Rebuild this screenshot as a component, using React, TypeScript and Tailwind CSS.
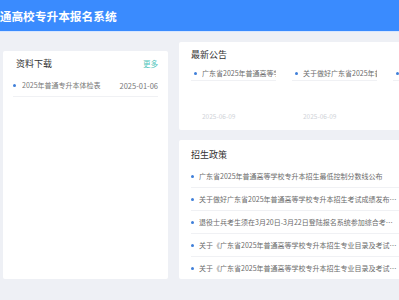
const downloads = [{ title: "2025年普通专升本体检表", date: "2025-01-06" }];

const notices = [
  { title: "广东省2025年普通高等学校专升本招生最低控制分数线公布", date: "2025-06-09" },
  { title: "关于做好广东省2025年普通高等学校专升本招生考试成绩发布工作的通知", date: "2025-06-09" },
  { title: "关于公布2025年专升本考试成绩复核结果的通知", date: "2025-06-09" },
];

const policies = [
  "广东省2025年普通高等学校专升本招生最低控制分数线公布",
  "关于做好广东省2025年普通高等学校专升本招生考试成绩发布工作的通知",
  "退役士兵考生须在3月20日-3月22日登陆报名系统参加综合考查的院校名单",
  "关于《广东省2025年普通高等学校专升本招生专业目录及考试要求》的补充说明",
  "关于《广东省2025年普通高等学校专升本招生专业目录及考试要求》的通知",
];

function Dot() {
  return <span className="h-[3px] w-[3px] shrink-0 rounded-full bg-[#3f7fd9]" />;
}

export default function App() {
  return (
    <div
      className="h-[300px] w-[399px] overflow-hidden bg-[#eef0f5]"
      style={{ fontFamily: '"Noto Sans CJK SC", "Noto Sans", sans-serif' }}
    >
      <header className="flex h-[32px] items-center border-b border-[#d6e6ff] bg-[#3a8bfe]">
        <h1 className="ml-[-12px] whitespace-nowrap text-[11.7px] font-bold text-white">
          普通高校专升本报名系统
        </h1>
      </header>

      <div className="flex items-start">
        <section className="ml-[3px] mt-[19px] h-[228px] w-[165px] shrink-0 rounded-[2px] bg-white px-[10px] pt-[2px]">
          <div className="flex h-[22px] items-center justify-between pl-[3px]">
            <h2 className="text-[9px] text-[#333]">资料下载</h2>
            <span className="text-[7.5px] text-[#52c6bd]">更多</span>
          </div>
          <ul>
            {downloads.map((d) => (
              <li
                key={d.title}
                className="flex h-[22px] items-center gap-[6px] border-b border-[#f0f1f4] text-[7px] text-[#777]"
              >
                <Dot />
                <span className="flex-1 truncate">{d.title}</span>
                <span className="text-[7.5px]">{d.date}</span>
              </li>
            ))}
          </ul>
        </section>

        <div className="ml-[11px] mt-[10px] flex w-[260px] shrink-0 flex-col gap-[10px]">
          <section className="h-[88px] rounded-[2px] bg-white px-[12px] pt-[7px]">
            <h2 className="text-[9px] leading-[12px] text-[#333]">最新公告</h2>
            <div className="mt-[6px] flex gap-[16px]">
              {notices.map((n) => (
                <div key={n.title} className="w-[85px] shrink-0">
                  <div className="flex h-[14px] items-center gap-[5px] overflow-hidden whitespace-nowrap border-b border-[#f0f1f4] pl-[3px] text-[7px] text-[#6b6b6b]">
                    <Dot />
                    <span className="overflow-hidden">{n.title}</span>
                  </div>
                  <p className="mt-[31px] pl-[11px] text-[6.5px] text-[#d0d3d8]">{n.date}</p>
                </div>
              ))}
            </div>
          </section>

          <section className="h-[139px] rounded-[2px] bg-white pl-[12px] pr-[10px] pt-[9px]">
            <h2 className="text-[9px] leading-[12px] text-[#333]">招生政策</h2>
            <ul className="mt-[4px]">
              {policies.map((p, i) => (
                <li
                  key={p}
                  className={`flex h-[23px] items-center gap-[5px] text-[7px] text-[#6b6b6b] ${
                    i < policies.length - 1 ? "border-b border-[#f0f1f4]" : ""
                  }`}
                >
                  <Dot />
                  <span className="w-[200px] truncate">{p}</span>
                </li>
              ))}
            </ul>
          </section>
        </div>
      </div>
    </div>
  );
}
